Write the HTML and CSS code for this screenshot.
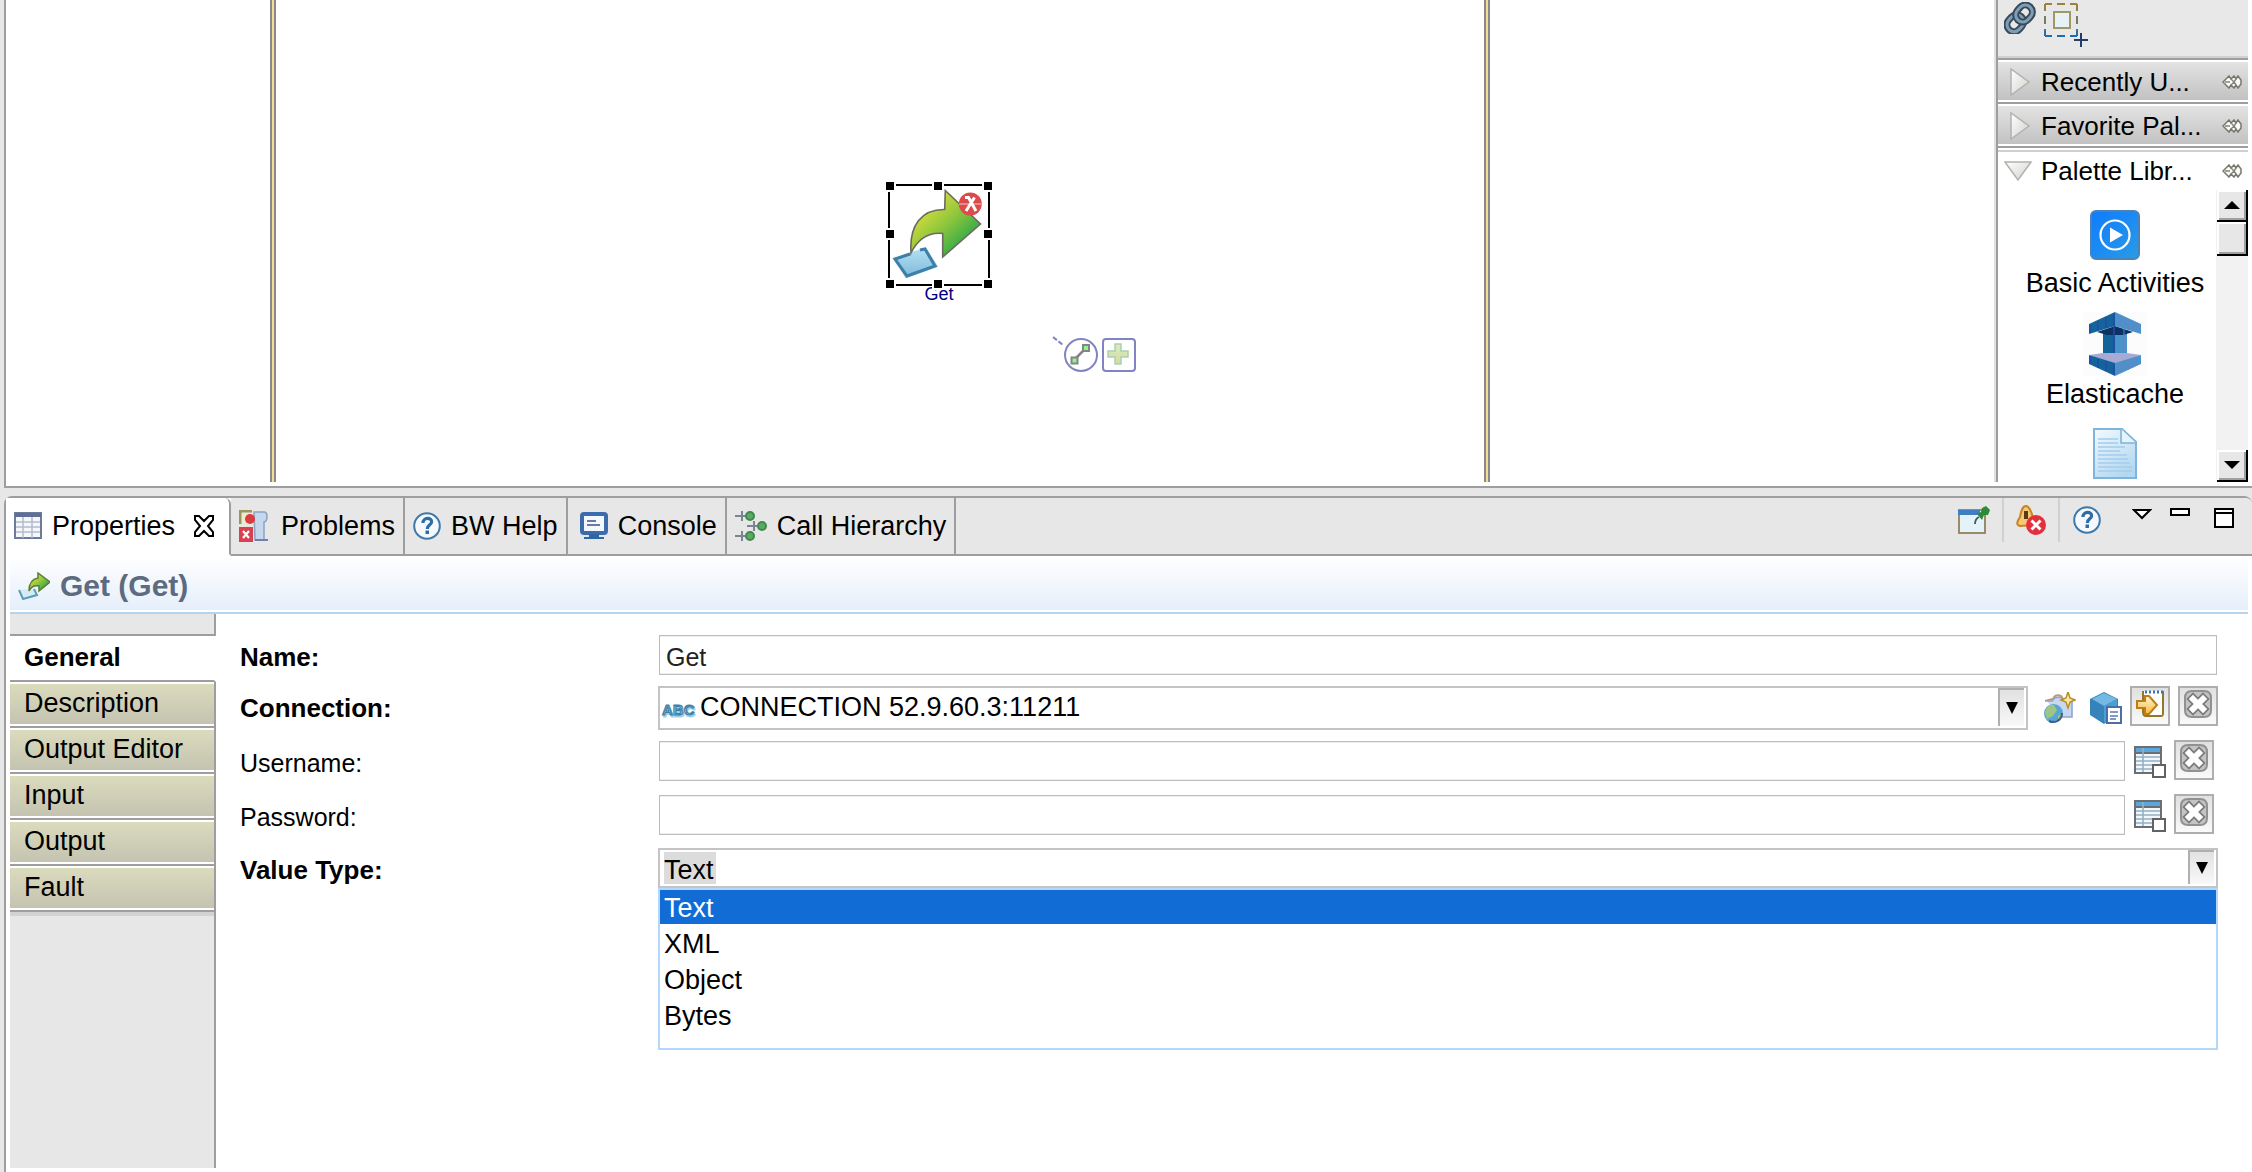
FILE: index.html
```html
<!DOCTYPE html>
<html lang="en">
<head>
<meta charset="utf-8">
<title>Get - Properties</title>
<link rel="stylesheet" href="styles.css">
</head>
<body>
<svg class="defs" aria-hidden="true">
  <defs>
    <linearGradient id="arrow" x1="0" y1="0" x2="1" y2="1">
      <stop offset="0.15" stop-color="#e6e23a"/><stop offset="0.5" stop-color="#8fc63d"/><stop offset="0.85" stop-color="#1fa54a"/>
    </linearGradient>
    <linearGradient id="sheet" x1="0" y1="0" x2="0" y2="1"><stop offset="0" stop-color="#b5e2f3"/><stop offset="1" stop-color="#7db9da"/></linearGradient>
    <linearGradient id="play" x1="0" y1="0" x2="1" y2="1"><stop offset="0" stop-color="#0f7bff"/><stop offset="1" stop-color="#2a9be4"/></linearGradient>
    <linearGradient id="doc" x1="0" y1="0" x2="0.6" y2="1"><stop offset="0" stop-color="#f3fafe"/><stop offset="1" stop-color="#b4d8f1"/></linearGradient>
    <linearGradient id="dash" x1="0" y1="0" x2="0" y2="1"><stop offset="0" stop-color="#a08238"/><stop offset="0.6" stop-color="#6c7a72"/><stop offset="1" stop-color="#1c6bb4"/></linearGradient>
    <linearGradient id="plus" x1="0" y1="0" x2="0" y2="1"><stop offset="0" stop-color="#dcebc2"/><stop offset="1" stop-color="#d3dd9a"/></linearGradient>
    <linearGradient id="gold" x1="0" y1="0" x2="0" y2="1"><stop offset="0" stop-color="#fff6cf"/><stop offset="1" stop-color="#f4bb44"/></linearGradient>
    <linearGradient id="tri" x1="0" y1="0" x2="1" y2="1"><stop offset="0" stop-color="#ffffff"/><stop offset="1" stop-color="#cfd2cc"/></linearGradient>
    <symbol id="i-pin" viewBox="0 0 20 14">
      <path d="M7 1 1 7l6 6 2-3 3 3 2-3 2 3 3-4V5l-3-4-2 3-2-3-3 3z" fill="#fbfbf8" stroke="#77776e" stroke-width="1.500"/>
      <path d="M3 7h5M9 4l3 3-3 3M14 4l-2 3 2 3" fill="none" stroke="#84847a" stroke-width="1.400"/>
    </symbol>
    <symbol id="i-help" viewBox="0 0 28 28">
      <circle cx="14" cy="14" r="12.800" fill="#f4f9fd" stroke="#3f78a9" stroke-width="2"/>
      <path d="M10 11c0-6 9-6 8.600-1C18.500 13 14.300 12.800 14.300 17" fill="none" stroke="#2f6ca3" stroke-width="3.200"/>
      <rect x="12.500" y="18.500" width="3.500" height="3.500" fill="#2f6ca3"/>
    </symbol>
    <symbol id="i-clear" viewBox="0 0 28 28">
      <path d="M8 1h12q7 0 7 7v12q0 7-7 7H8q-7 0-7-7V8q0-7 7-7z" fill="#c4c4c4" stroke="#919191" stroke-width="2"/>
      <path d="M9 9l10 10M19 9 9 19" stroke="#7c7c7c" stroke-width="9.500" stroke-linecap="square"/>
      <path d="M9 9l10 10M19 9 9 19" stroke="#fff" stroke-width="6" stroke-linecap="square"/>
    </symbol>
    <symbol id="i-table" viewBox="0 0 32 32">
      <rect x="1" y="1" width="26" height="26" fill="#f3f7fa" stroke="#6b6e73" stroke-width="2"/>
      <rect x="2" y="2" width="24" height="4" fill="#5ba7dc"/>
      <path d="M2 7h24" stroke="#6b6e73" stroke-width="2"/>
      <path d="M2 11h24M2 15h24M2 19h24M2 23h24M9 2v24" stroke="#93b0c4" stroke-width="1.600"/>
      <rect x="19" y="19" width="12" height="12" fill="#fff" stroke="#626262" stroke-width="2"/>
    </symbol>
    <symbol id="i-right" viewBox="0 0 20 28"><path d="M1 1v26L19 14z" fill="url(#tri)" stroke="#b1b3ae" stroke-width="1.500"/></symbol>
    <symbol id="i-down" viewBox="0 0 28 20"><path d="M1 1h26L14 19z" fill="url(#tri)" stroke="#b1b3ae" stroke-width="1.500"/></symbol>
  </defs>
</svg>

<main class="workbench">
  <section class="editor" aria-label="Editor">
    <div class="canvas">
      <div class="lifeline first"></div>
      <div class="lifeline second"></div>
      <div class="node">
        <svg width="112" height="112" viewBox="0 0 112 112" aria-hidden="true">
          <path d="M8.700 78.300 42 67.300 54 86.700 22 98.300z" fill="url(#sheet)"/>
          <path d="M26 74 11 79 23 96 51 86 41 69 36 70" fill="none" stroke="#3c7fa8" stroke-width="3"/>
          <path d="M61.300 10.500 96.500 44 58.700 77V53.500C44 52 34 59 27 73 25 45 38 29 60.700 29.500z" fill="url(#arrow)" stroke="#6b6b62" stroke-width="1.600"/>
          <circle cx="86.300" cy="24" r="11.500" fill="#dc4b4b"/><path d="M75 24h23" stroke="#e98a86" stroke-width="2"/>
          <path d="M81 17.500h3.500L92 31M90.500 17.500 82 31" fill="none" stroke="#fff" stroke-width="3"/>
          <rect x="5" y="5" width="100" height="100" fill="none" stroke="#000" stroke-width="2"/>
          <g fill="#000" stroke="#fff" stroke-width="2">
            <rect x="1" y="1" width="10" height="10"/><rect x="49" y="1" width="10" height="10"/><rect x="99" y="1" width="10" height="10"/>
            <rect x="1" y="49" width="10" height="10"/><rect x="99" y="49" width="10" height="10"/>
            <rect x="1" y="99" width="10" height="10"/><rect x="49" y="99" width="10" height="10"/><rect x="99" y="99" width="10" height="10"/>
          </g>
        </svg>
        <span class="node-name">Get</span>
      </div>
      <svg class="handles" width="88" height="40" viewBox="0 0 88 40" aria-hidden="true">
        <path d="m3 3 10 8" stroke="#8085c2" stroke-width="2" stroke-dasharray="5 2"/>
        <circle cx="31" cy="21" r="16" fill="#fff" stroke="#8085c2" stroke-width="2"/>
        <path d="M24 26 36 14" stroke="#858585" stroke-width="2.500"/>
        <rect x="21.500" y="23.500" width="6" height="6" fill="#8ff58f" stroke="#858585" stroke-width="2"/>
        <rect x="33" y="11" width="6" height="6" fill="#8ff58f" stroke="#858585" stroke-width="2"/>
        <rect x="53" y="5" width="32" height="32" rx="3" fill="#fff" stroke="#8085c2" stroke-width="2"/>
        <path d="M65 10h6v7h7v6h-7v7h-6v-7h-7v-6h7z" fill="url(#plus)" stroke="#a9cfb4" stroke-width="1.500"/>
      </svg>
    </div>

    <aside class="palette" aria-label="Palette">
      <div class="palette-tools">
        <button type="button" aria-label="Link"><svg width="32" height="32" viewBox="0 0 32 32">
          <g fill="none" transform="rotate(-48 16 16)">
            <rect x="0" y="9" width="18" height="14" rx="7" stroke="#37495a" stroke-width="7"/><rect x="0" y="9" width="18" height="14" rx="7" stroke="#7f9db3" stroke-width="3"/>
            <rect x="13" y="9" width="18" height="14" rx="7" stroke="#37495a" stroke-width="7"/><rect x="13" y="9" width="18" height="14" rx="7" stroke="#7f9db3" stroke-width="3"/>
          </g></svg></button>
        <button type="button" aria-label="Marquee"><svg width="46" height="46" viewBox="0 0 46 46">
          <rect x="1" y="2" width="32" height="32" fill="none" stroke="url(#dash)" stroke-width="2" stroke-dasharray="7 5 8 5 7 0"/>
          <rect x="10" y="10" width="16" height="16" fill="#e6f2f6" stroke="#a39768" stroke-width="2"/>
          <path d="M37 31v14M30 38h14" stroke="#253c6c" stroke-width="2"/></svg></button>
      </div>
      <button type="button" class="drawer"><svg class="tw" width="20" height="28"><use href="#i-right"/></svg><span>Recently U...</span><svg width="20" height="14"><use href="#i-pin"/></svg></button>
      <button type="button" class="drawer"><svg class="tw" width="20" height="28"><use href="#i-right"/></svg><span>Favorite Pal...</span><svg width="20" height="14"><use href="#i-pin"/></svg></button>
      <button type="button" class="drawer open"><svg class="tw" width="28" height="20"><use href="#i-down"/></svg><span>Palette Libr...</span><svg width="20" height="14"><use href="#i-pin"/></svg></button>
      <div class="library">
        <ul class="entries">
          <li><svg width="50" height="50" viewBox="0 0 50 50"><rect x="1" y="1" width="48" height="48" rx="5" fill="url(#play)" stroke="#4b82b8" stroke-width="2"/><circle cx="25" cy="25" r="14.500" fill="none" stroke="#fff" stroke-width="2.200"/><path d="M20 17.500v15L33 25z" fill="#fff"/></svg><span>Basic Activities</span></li>
          <li><svg width="64" height="64" viewBox="0 0 64 64">
            <rect width="64" height="64" fill="#fcfcfc"/>
            <path d="M20 20h12v22H20z" fill="#136599"/><path d="M32 20h12v22H32z" fill="#4a93c9"/>
            <path d="M14 20 32 14l18 6-10 3H24z" fill="#093363"/>
            <path d="M32 0 6 12v10l26-8z" fill="#136599"/><path d="m32 0 26 12v10l-26-8z" fill="#4a93c9"/>
            <path d="M6 43 20 41h24l14 2-26 10z" fill="#a9a9d6"/>
            <path d="M6 43v9l26 12V51z" fill="#136599"/><path d="M58 43v9L32 64V51z" fill="#4a93c9"/>
            <path d="M7 13v8M15 9v9M23 5v11M31 1v40M7 44v8M15 47v9M23 50v9M31 52v11" stroke="#2b45ae" stroke-width="1.500"/>
            <path d="M37 4v10M41 6v34M45 8v10M49 10v9M53 11v9M37 52v9M41 50v9M45 49v9M49 48v8M53 46v8" stroke="#6c7fc9" stroke-width="1"/></svg><span>Elasticache</span></li>
          <li><svg width="44" height="51" viewBox="0 0 44 51"><path d="M1 1h28l14 13v36H1z" fill="url(#doc)" stroke="#7db5dc" stroke-width="2"/><path d="M28 1v14h15" fill="#e4f3fc" stroke="#7db5dc" stroke-width="1.600"/><path d="M5 11h20M5 15h20M5 19h27M5 23h22M5 27h29M5 31h30M5 35h32M5 39h34M5 43h34" stroke="#a4cdec" stroke-width="1.500"/></svg></li>
        </ul>
        <div class="scrollbar">
          <button type="button" aria-label="Scroll up"><svg width="16" height="8" viewBox="0 0 16 8"><path d="M0 8 8 0l8 8z"/></svg></button>
          <div class="thumb"></div>
          <button type="button" class="scroll-down" aria-label="Scroll down"><svg width="16" height="8" viewBox="0 0 16 8"><path d="m0 0 8 8 8-8z"/></svg></button>
        </div>
      </div>
    </aside>
  </section>

  <section class="view" aria-label="Properties">
    <div class="tabbar">
      <div class="tabs" role="tablist">
        <button type="button" role="tab" aria-selected="true" class="tab active"><svg width="28" height="28" viewBox="0 0 28 28"><rect x="1" y="1" width="26" height="25" fill="#f5f7fb" stroke="#6d7b9c" stroke-width="2"/><path d="M1 3h26" stroke="#5e6f96" stroke-width="4"/><path d="M2 10h24M2 15h24M2 20h24M9 5v21M18 5v21" stroke="#b4bccc" stroke-width="1.500"/></svg><span>Properties</span><svg class="close" width="22" height="22" viewBox="0 0 22 22"><path d="M2 1h4l5 5 5-5h4v4l-5 6 5 6v4h-4l-5-5-5 5H2v-4l5-6-5-6z" fill="#fff" stroke="#000" stroke-width="2"/></svg></button>
        <button type="button" role="tab" class="tab"><svg width="32" height="32" viewBox="0 0 32 32"><path d="M1 14V1h12" fill="none" stroke="#9c9560" stroke-width="3"/><path d="M3 3h14v12H3z" fill="#eee9d2"/><path d="M15 2h10c4 0 4 9 0 10v18h-9z" fill="#c6d7ee" stroke="#8da3c4" stroke-width="1.500"/><path d="M16 30h13" stroke="#6e82a8" stroke-width="2"/><circle cx="11" cy="9" r="5" fill="#dd3a3f"/><rect x="0" y="17" width="14" height="15" fill="#d9414e"/><path d="m4 21 6 7m0-7-6 7" stroke="#fff" stroke-width="2.200"/></svg><span>Problems</span></button>
        <button type="button" role="tab" class="tab"><svg width="28" height="28"><use href="#i-help"/></svg><span>BW Help</span></button>
        <button type="button" role="tab" class="tab console"><svg width="28" height="28" viewBox="0 0 28 28"><rect x="2" y="2" width="24" height="19" rx="2" fill="#f3f8fd" stroke="#3c6cae" stroke-width="4"/><path d="M7 9h9M7 13h13" stroke="#6d78a8" stroke-width="1.800"/><path d="M9 22h10v3h5v2H4v-2h5z" fill="#3166a5"/></svg><span>Console</span></button>
        <button type="button" role="tab" class="tab"><svg width="32" height="32" viewBox="0 0 32 32"><path d="M0 6h10M7 1v10M12 16h10M19 11v10M0 26h10M7 21v10" stroke="#7d8594" stroke-width="2"/><g fill="#5fa765" stroke="#3c8a4c" stroke-width="2"><circle cx="15" cy="6" r="4"/><circle cx="27" cy="16" r="4"/><circle cx="15" cy="26" r="4"/></g></svg><span>Call Hierarchy</span></button>
      </div>
      <div class="tools">
        <button type="button" class="tool pin" aria-label="Pin view"><svg width="32" height="28" viewBox="0 0 32 28"><rect x="1" y="4" width="26" height="23" fill="#e3f3f9" stroke="#9a8d66" stroke-width="2"/><path d="M0 4h22v5H0z" fill="#3f7fc0"/><path d="M17 18c0-4 2-6 4-7" stroke="#46545c" stroke-width="1.800" fill="none"/><path d="m19 8 4-2 1-4 4-2 4 4-2 5h-4l-2 5z" fill="#2c8a3a"/></svg></button>
        <button type="button" class="tool" aria-label="Show errors"><svg width="30" height="30" viewBox="0 0 30 30"><path d="M10 1c4 0 8 12 8 19L4 21c-5-1-2-6 0-9C5 7 6 1 10 1z" fill="#f6c877" stroke="#c78424" stroke-width="2"/><path d="M10 6v8" stroke="#5b3b16" stroke-width="4"/><circle cx="20" cy="20" r="10" fill="#e62f3d"/><path d="m15.500 15.500 9 9m0-9-9 9" stroke="#fff" stroke-width="3"/></svg></button>
        <button type="button" class="tool" aria-label="Help"><svg width="28" height="28"><use href="#i-help"/></svg></button>
        <button type="button" class="winbtn" aria-label="View menu"><svg width="20" height="12" viewBox="0 0 20 12"><path d="M2 2h16l-8 8z" fill="#fff" stroke="#000" stroke-width="2"/></svg></button>
        <button type="button" class="winbtn" aria-label="Minimize"><svg width="20" height="8" viewBox="0 0 20 8"><path d="M1 1h18v6H1z" fill="#fff" stroke="#000" stroke-width="2"/></svg></button>
        <button type="button" class="winbtn max" aria-label="Maximize"><svg width="20" height="20" viewBox="0 0 20 20"><path d="M1 1h18v18H1zM2 5h16" fill="#fff" stroke="#000" stroke-width="2"/></svg></button>
      </div>
    </div>

    <header class="title">
      <svg width="32" height="28" viewBox="0 0 32 28"><path d="m1 18 4 9 14-4-3-6" fill="#d4ebf5" stroke="#5a9cc0" stroke-width="2"/><path d="M20 1 32 10 21 19v-5c-5-1-8 1-10 5 0-8 3-12 9-13z" fill="url(#arrow)" stroke="#5c7a35" stroke-width="1.500"/></svg>
      <h1>Get (Get)</h1>
    </header>

    <div class="columns">
      <nav class="side" aria-label="Sections">
        <div class="side-top"></div>
        <button type="button" class="side-tab current">General</button>
        <button type="button" class="side-tab">Description</button>
        <button type="button" class="side-tab">Output Editor</button>
        <button type="button" class="side-tab">Input</button>
        <button type="button" class="side-tab">Output</button>
        <button type="button" class="side-tab">Fault</button>
        <div class="side-rest"></div>
      </nav>

      <form class="form">
        <label for="name" class="req">Name:</label>
        <div class="field"><input id="name" type="text" value="Get"></div>

        <label for="conn" class="req">Connection:</label>
        <div class="field">
          <div class="combo">
            <svg class="abc" width="34" height="24" viewBox="0 0 34 24" aria-hidden="true"><text x="0" y="19">ABC</text></svg>
            <select id="conn" class="conn"><option>CONNECTION 52.9.60.3:11211</option></select>
            <span class="drop"></span>
          </div>
          <div class="actions">
            <button type="button" class="icon" aria-label="New connection"><svg width="32" height="32" viewBox="0 0 32 32"><path d="M3 9h5c3-5 10-5 13 0h7v16H16" fill="#c8d8f1" stroke="#8ea4d4" stroke-width="1.600"/><path d="M1 9 9 7c2-5 8-5 10 0" fill="none" stroke="#b79a83" stroke-width="2"/><circle cx="9.500" cy="21.500" r="9.500" fill="#58a4d3"/><path d="M1 21c1-6 5-9 9-8l3 5-4 6-6 3zM14 24l4-3c0 4-2 6-4 8z" fill="#9cc586"/><path d="M5 29c6 3 13-1 13-8" fill="none" stroke="#405c8e" stroke-width="2"/><path d="m24 0 2 6 5 2-5 2-2 6-2-6-5-2 5-2z" fill="#fbeaa5" stroke="#b88d22" stroke-width="1.500"/></svg></button>
            <button type="button" class="icon" aria-label="Shared resource"><svg width="32" height="32" viewBox="0 0 32 32"><path d="M14 0 0 7v16l14 9 14-9V7z" fill="#3583bb"/><path d="M14 1 2 7l12 7 13-7z" fill="#74b9e4"/><path d="M14 14 27 7v16l-13 8z" fill="#4b9dd2"/><rect x="17" y="15" width="14" height="16" fill="#fff" stroke="#4a6fa8" stroke-width="2"/><path d="M20 20h8M20 24h8M20 27h6" stroke="#6278ab" stroke-width="1.600"/></svg></button>
            <button type="button" class="square" aria-label="Go to property"><svg width="28" height="28" viewBox="0 0 28 28"><path d="M7 1v21c0 3 1 4 3 4h15c2 0 2-1 2-3V1" fill="#fff" stroke="#93762b" stroke-width="2"/><path d="M9 2h18" stroke="#3d74b4" stroke-width="3" stroke-dasharray="2 2"/><path d="M1 11h8V6l4 0 8 9-8 9H9v-6H1z" fill="url(#gold)" stroke="#c17c18" stroke-width="2"/></svg></button>
            <button type="button" class="square" aria-label="Clear connection"><svg width="28" height="28"><use href="#i-clear"/></svg></button>
          </div>
        </div>

        <label for="user">Username:</label>
        <div class="field side-field"><input id="user" type="text"><button type="button" class="icon" aria-label="Map username"><svg width="32" height="32"><use href="#i-table"/></svg></button><button type="button" class="square" aria-label="Clear username"><svg width="28" height="28"><use href="#i-clear"/></svg></button></div>

        <label for="pass">Password:</label>
        <div class="field side-field"><input id="pass" type="password"><button type="button" class="icon" aria-label="Map password"><svg width="32" height="32"><use href="#i-table"/></svg></button><button type="button" class="square" aria-label="Clear password"><svg width="28" height="28"><use href="#i-clear"/></svg></button></div>

        <label for="type" class="req">Value Type:</label>
        <div class="field value">
          <div class="combo">
            <select id="type" class="selected-text"><option>Text</option><option>XML</option><option>Object</option><option>Bytes</option></select>
            <span class="drop"></span>
          </div>
          <ul class="options" role="listbox" aria-label="Value Type">
            <li role="option" aria-selected="true">Text</li>
            <li role="option">XML</li>
            <li role="option">Object</li>
            <li role="option">Bytes</li>
          </ul>
        </div>
      </form>
    </div>
  </section>
</main>
</body>
</html>
```
FILE: styles.css
```css
* { box-sizing: border-box; }

:root {
  --grey: #e7e7e7;
  --line: #9e9e9e;
  --field: #bdbdbd;
}

body {
  margin: 0;
  background: var(--grey);
  color: #000;
  font: 27px/32px "Liberation Sans", Arial, sans-serif;
}

.defs { position: absolute; width: 0; height: 0; }

button {
  margin: 0;
  padding: 0;
  border: 0;
  background: none;
  color: inherit;
  font: inherit;
}

ul { margin: 0; padding: 0; list-style: none; }
svg { display: block; flex: none; }

.workbench {
  display: flex;
  flex-direction: column;
  gap: 8px;
  min-height: 100vh;
  padding-left: 4px;
}

/* Editor and palette */
.editor {
  display: flex;
  border-left: 2px solid var(--line);
  border-bottom: 2px solid var(--line);
  background: #fff;
  padding: 0 4px 4px 0;
}

.canvas { position: relative; flex: 1; }

.lifeline {
  position: absolute;
  top: 0;
  bottom: 0;
  width: 6px;
  border: solid #8a8a8a;
  border-width: 0 2px;
  background: #f5dc90;
}
.lifeline.first { left: 264px; }
.lifeline.second { left: 1478px; }

.node { position: absolute; z-index: 0; left: 878px; top: 180px; width: 110px; }
.node-name {
  position: absolute;
  left: 0;
  right: 0;
  top: 104px;
  z-index: -1;
  font-size: 18px;
  line-height: 20px;
  text-align: center;
  color: #000080;
}
.handles { position: absolute; left: 1044px; top: 334px; }

.palette {
  display: flex;
  flex-direction: column;
  width: 252px;
  border-left: 2px solid var(--line);
  box-shadow: -2px 0 #e0e0e0;
}

.palette-tools {
  display: flex;
  gap: 8px;
  align-items: flex-start;
  height: 60px;
  padding: 2px 6px;
  border-bottom: 2px solid var(--line);
  background: #e8e8e8;
  box-shadow: inset 0 -2px #d0d0d0;
}

.drawer {
  display: flex;
  align-items: center;
  height: 44px;
  padding: 0 6px 0 12px;
  border-top: 2px solid #fff;
  border-bottom: 2px solid var(--line);
  background: linear-gradient(#e3e3e3, #c0c0c0) padding-box;
  box-shadow: inset 0 -2px #fff;
  text-align: left;
}
.drawer span { flex: 1; padding-left: 11px; font-size: 26px; }
.drawer.open {
  height: 40px;
  margin-top: 2px;
  padding-left: 6px;
  border-top-color: #d0d0d0;
  border-bottom: 0;
  background: #fff;
}
.drawer.open span { padding-left: 9px; }

.library { display: flex; height: 292px; overflow: hidden; }
.entries {
  display: flex;
  flex: 1;
  flex-direction: column;
  align-items: center;
  padding: 20px 0 0 16px;
}
.entries li {
  display: flex;
  flex: none;
  flex-direction: column;
  align-items: center;
  height: 102px;
  white-space: nowrap;
}
.entries li span { padding-top: 7px; }
.entries li:nth-child(2) { height: 116px; }
.entries li:nth-child(2) span { padding-top: 2px; }

.scrollbar {
  display: flex;
  flex-direction: column;
  width: 32px;
  padding-left: 1px;
  background: #f2f2f2;
}
.scrollbar button, .thumb {
  display: grid;
  place-items: center;
  height: 32px;
  border: solid #000;
  border-width: 0 2px 2px 0;
  background: #e7e7e7;
  box-shadow: inset 2px 2px #fff, inset -2px -2px #a0a0a0;
}
.scrollbar .thumb { height: 34px; }
.scroll-down { margin-top: auto; }

/* View stack */
.view {
  display: flex;
  flex: 1;
  flex-direction: column;
  border: solid var(--line);
  border-width: 2px 0 0 2px;
  border-radius: 8px 8px 0 0;
  background: #fff;
}

.tabbar { display: flex; height: 58px; }
.tabs { display: flex; }
.tab {
  display: flex;
  align-items: center;
  gap: 10px;
  padding: 0 8px;
  border-right: 2px solid var(--line);
  border-bottom: 2px solid var(--line);
  background: var(--grey);
  white-space: nowrap;
}
.tab.console { padding-left: 12px; }
.tab.active {
  border-top-right-radius: 6px;
  border-bottom-color: #fff;
  background: #fff;
  padding-right: 14px;
}
.tab .close { margin-left: 8px; }

.tools {
  display: flex;
  flex: 1;
  justify-content: flex-end;
  align-items: flex-start;
  padding-right: 18px;
  border-bottom: 2px solid var(--line);
  border-top-right-radius: 6px;
  background: var(--grey);
}
.tool {
  display: grid;
  place-items: center;
  width: 56px;
  height: 44px;
}
.tool + .tool { border-left: 2px solid #d0d0d0; }
.winbtn { padding: 10px 0 0 18px; }
.winbtn.max { padding-left: 24px; }

.title {
  display: flex;
  align-items: center;
  gap: 10px;
  height: 58px;
  margin: 0 4px;
  padding: 4px 8px 0;
  border-bottom: 2px solid #b3d5f2;
  background: linear-gradient(#fff, #e4eefa);
  box-shadow: inset 0 -2px #fff;
}
.title h1 {
  margin: 0;
  font-size: 30px;
  line-height: 36px;
  color: #5d6b80;
}

.columns { display: flex; flex: 1; padding: 0 34px 4px 4px; }

.side { display: flex; flex-direction: column; width: 206px; flex: none; }
.side-top {
  height: 22px;
  border-bottom: 2px solid var(--line);
  border-right: 2px solid var(--line);
  background: var(--grey);
}
.side-tab {
  height: 46px;
  padding: 0 8px 2px 14px;
  border: solid var(--line);
  border-width: 0 2px 2px 0;
  background: linear-gradient(#dcdcbe, #c3c2b0);
  box-shadow: inset 0 2px #fff, inset 0 -2px #fff;
  text-align: left;
}
.side-tab.current {
  border-right-color: #fff;
  background: #fff;
  font-size: 26px;
  font-weight: bold;
}
.side-rest {
  flex: 1;
  border-right: 2px solid var(--line);
  background: var(--grey);
  box-shadow: inset 0 4px #d2d2d2;
}

.form {
  display: grid;
  flex: 1;
  grid-template-columns: 418px minmax(0, 1fr);
  grid-template-rows: 51px 54px 54px 54px auto;
  align-content: start;
  padding: 21px 0 0 24px;
}
.form label { padding-top: 8px; font-size: 25px; line-height: 30px; }
.form label.req { padding-top: 7px; font-size: 26px; font-weight: bold; }

.field { display: flex; align-items: flex-start; min-width: 0; }
.field > input {
  flex: 1;
  min-width: 0;
  height: 40px;
  margin: 0 1px;
  padding: 4px 6px 0;
  border: 1px solid var(--field);
  outline: 0;
  background: #fff;
  box-shadow: inset 0 1px #eee, inset 0 -1px #eee;
  color: #222;
  font: 25px/30px "Liberation Sans", Arial, sans-serif;
}

.combo {
  position: relative;
  display: flex;
  flex: 1;
  align-items: center;
  min-width: 0;
  height: 44px;
  border: 2px solid #c4c4c4;
  background: #fff;
}
.combo select {
  flex: 1;
  align-self: stretch;
  min-width: 0;
  margin: 0;
  padding: 0 30px 0 4px;
  border: 0;
  outline: 0;
  appearance: none;
  background: none;
  color: #000;
  font: inherit;
}
.combo .conn { padding-bottom: 2px; }
.combo .selected-text {
  padding-top: 4px;
  background: linear-gradient(#dcdcdc, #dcdcdc) 4px 2px / 52px 32px no-repeat;
}

.drop {
  position: absolute;
  top: 0;
  right: 2px;
  bottom: 2px;
  display: grid;
  place-items: center;
  width: 26px;
  border: solid #b0b0b0;
  border-width: 2px 0 0 2px;
  background: linear-gradient(#e2e2e2, #f8f8f8);
  pointer-events: none;
}
.drop::before {
  content: "";
  border: solid transparent;
  border-width: 12px 6px 0;
  border-top-color: #000;
}

.abc { margin-left: 2px; overflow: visible; }
.abc text {
  fill: #3f7fa4;
  stroke: #3f7fa4;
  font: bold 15px "Liberation Sans", Arial, sans-serif;
  text-shadow: 1px 2px #9fd0e8;
}

.actions { display: flex; align-items: flex-start; }
.icon { padding-top: 6px; }
.actions .icon { width: 32px; margin-left: 14px; }
.actions .icon:first-child { margin-left: 16px; }
.square {
  display: grid;
  justify-items: center;
  align-content: start;
  flex: none;
  width: 40px;
  height: 40px;
  padding-top: 2px;
  border: 2px solid #aeaeae;
  background: linear-gradient(#e0e0e0, #fafafa);
}
.actions .square { margin-left: 8px; }
.side-field { padding-right: 4px; }
.side-field > input { margin-top: 1px; }
.side-field .icon { margin: 0 8px; }

.value { flex-direction: column; align-items: stretch; }
.value .combo { flex: none; height: 40px; }
.options {
  height: 162px;
  border: 2px solid #b3d7ff;
  background: #fff;
}
.options li { height: 36px; padding: 4px 4px 0; }
.options li[aria-selected="true"] { height: 34px; padding-top: 2px; background: #116cd6; color: #fff; }
```
